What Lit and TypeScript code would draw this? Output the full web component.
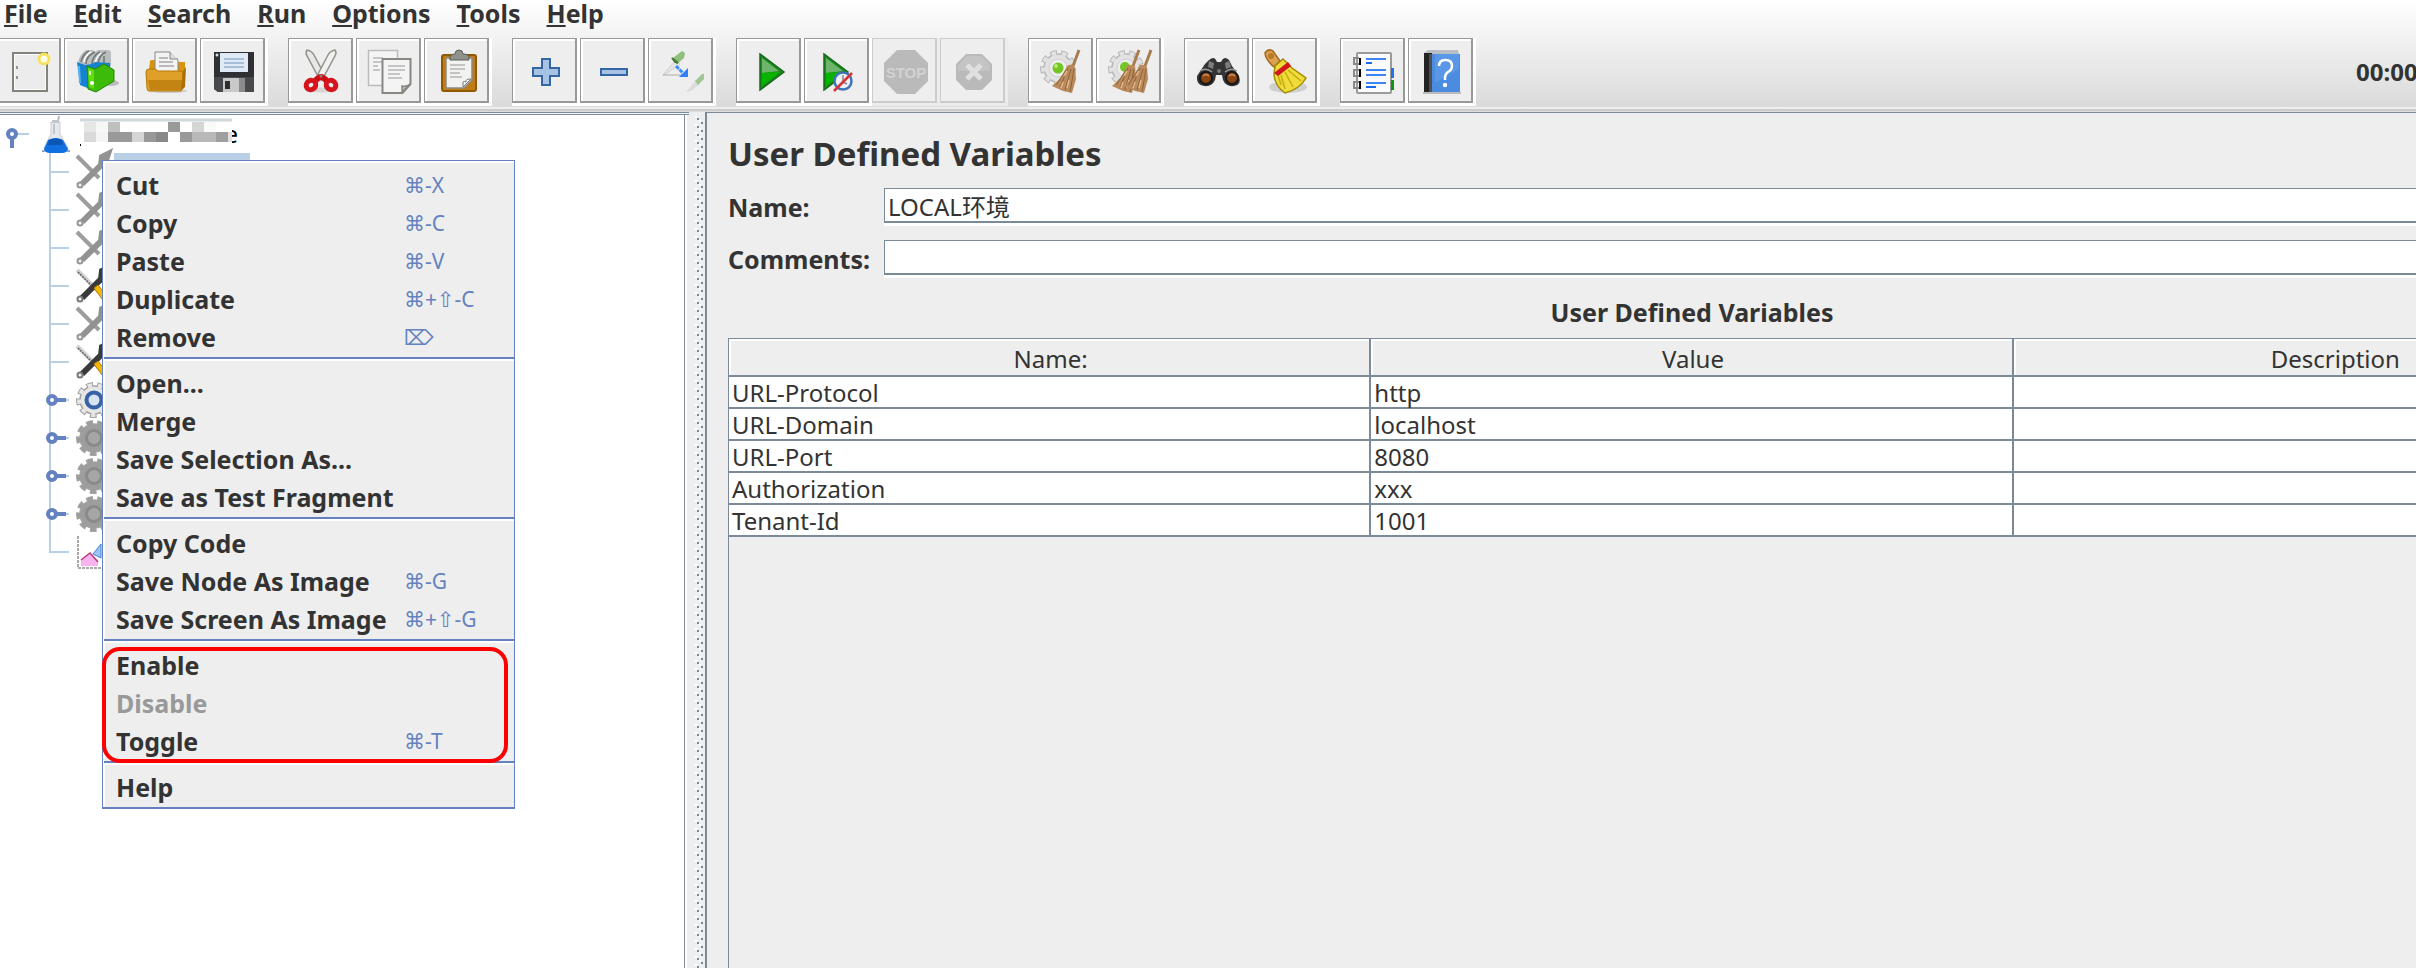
import { LitElement, html, css, svg, nothing } from "lit";
import { customElement, state } from "lit/decorators.js";

const gear = (cx: number, cy: number, body: string, edge: string) => svg`
  <circle cx="${cx}" cy="${cy}" r="15" fill="none" stroke="${edge}" stroke-width="6" stroke-dasharray="6.4 4.072" />
  <circle cx="${cx}" cy="${cy}" r="14" fill="${body}" stroke="${edge}" stroke-width="1.500" />
  <circle cx="${cx}" cy="${cy}" r="15" fill="none" stroke="${body}" stroke-width="4" stroke-dasharray="4.4 6.072" stroke-dashoffset="-1" />`;

const broom = (dx: number) => svg`
  <g transform="translate(${dx} 0)">
    <path d="M40 1l-6 16" stroke="#a87b4f" stroke-width="3" />
    <path d="M28 17q4-3 8 1l1 12-4 14-9-2-11-5 9-8z" fill="#b98a5c" />
    <path d="M29 19l-8 19M32 20l-6 21M35 20l-4 23M27 21l-10 15" stroke="#8f6238" stroke-width="1" fill="none" />
    <path d="M28 22l-3 5M24 33l-2 6M30 31l-2 8" stroke="#e2b88a" stroke-width="1.500" />
  </g>`;

const sheetLines = (x: number, y: number, w: number) => svg`
  <path d="M${x} ${y}h${w}M${x} ${y + 4}h${w}M${x} ${y + 8}h${w - 5}M${x} ${y + 12}h${w - 3}" stroke="#b5b5b5" stroke-width="1.500" />`;

const icons: Record<string, unknown> = {
  new: svg`
    <rect x="6" y="4" width="34" height="38" fill="#ececec" stroke="#82847c" stroke-width="2" />
    <rect x="7.500" y="5.500" width="31" height="35" fill="none" stroke="#fafafa" />
    <path d="M10 17v3M10 27v3" stroke="#777" stroke-width="1.500" />
    <circle cx="37" cy="10" r="5" fill="#fffce8" stroke="#f5e15e" stroke-width="3" />`,
  templates: svg`
    <ellipse cx="36" cy="34" rx="8" ry="3" fill="#bbb" />
    <path d="M3 13q2-8 8-12h7l2 2 3-2h9q5 0 4 5v11l-10 2H10z" fill="#b9bdbd" />
    <path d="M6 13q1-7 8-11M11 15q0-8 9-12M17 16q0-9 8-13M23 15q1-9 8-12M29 15V7" stroke="#6f7676" stroke-width="1.500" fill="none" />
    <path d="M9 13q1-7 7-10M20 15q1-7 6-11" stroke="#fff" stroke-width="1.500" fill="none" />
    <path d="M2 13l8 3 7-1 3-2 15 1v10l-20 16-10-4z" fill="#1583cf" />
    <path d="M4 17l1 17" stroke="#54b4f0" stroke-width="2" />
    <path d="M12 17l8 3 9-5 10 6v11L21 43l-8-3z" fill="#3cbb08" stroke="#208a05" />
    <path d="M13 19l6 2v19l-5-2z" fill="#5ee00e" />
    <circle cx="17" cy="34" r="2" fill="#fff" /><path d="M15 22v4" stroke="#e6ffd6" stroke-width="2" />`,
  open: svg`
    <ellipse cx="25" cy="42" rx="19" ry="2" fill="#ccc" />
    <path d="M7 12q0-1 2-1h4v11H6zM34 13h8v18l-6 9z" fill="#d8930f" />
    <path d="M12 3h15l8 8v12H12z" fill="#f3f3f3" stroke="#888" />
    <path d="M27 3v7h8" fill="#ddd" stroke="#888" />
    <path d="M16 9h9M16 13h14M16 17h15" stroke="#a7a7a7" stroke-width="1.500" />
    <path d="M3 23q0-3 3-3h6l3 2h22q3 0 3 3l-2 17H6q-2 0-2-3z" fill="#dfa02a" stroke="#b57905" />
    <path d="M5 31h34l-1 10H7z" fill="#c48411" />
    <path d="M40 22l3-4-1 20-4 4z" fill="#a96f05" />`,
  save: svg`
    <path d="M3 3h40v40H7l-4-3z" fill="#2f3033" />
    <path d="M3 28h40v15H7l-4-3z" fill="#48494d" />
    <rect x="9" y="4" width="28" height="19" fill="#dfeaf6" />
    <path d="M13 10h20M13 14h20M13 18h20" stroke="#a6bed8" stroke-width="2" />
    <rect x="12" y="29" width="22" height="14" fill="#c9c9c9" />
    <path d="M28 29h6v14h-6z" fill="#8b8b8b" />
    <rect x="14" y="32" width="5" height="8" fill="#2c2d30" />
    <circle cx="6" cy="6" r="1.500" fill="#ddd" />`,
  cut: svg`
    <ellipse cx="22" cy="41" rx="16" ry="2.500" fill="#d5d5d5" />
    <path d="M8 1q5 1 7 5l10 19-4 6L8 7q-2-3 0-6z" fill="#e8e8e6" stroke="#92948e" stroke-width="1.500" />
    <path d="M36 1q-5 1-7 5L19 25l4 6L36 7q2-3 0-6z" fill="#f1f1ef" stroke="#92948e" stroke-width="1.500" />
    <path d="M16 32q4-4 6-4t6 4" stroke="#cc0f14" stroke-width="6" fill="none" />
    <ellipse cx="12" cy="36" rx="5" ry="4.500" fill="#eee" stroke="#d5151b" stroke-width="5" transform="rotate(-35 12 36)" />
    <ellipse cx="32" cy="36" rx="5" ry="4.500" fill="#eee" stroke="#d5151b" stroke-width="5" transform="rotate(35 32 36)" />
    <circle cx="22" cy="27" r="1.500" fill="#888" />`,
  copy: svg`
    <path d="M1.500 1.500h29v35h-29z" fill="#f4f4f4" stroke="#bcbcbc" stroke-width="1.500" />
    ${sheetLines(6, 9, 10)}
    <path d="M15.500 10h28v25l-8 9h-20z" fill="#f4f4f4" stroke="#868882" stroke-width="2" />
    ${sheetLines(21, 17, 17)}
    <path d="M43 35l-8 8v-6q5 1 8-2z" fill="#bbb" stroke="#868882" stroke-width="1.500" />`,
  paste: svg`
    <rect x="7" y="6" width="34" height="36" rx="2" fill="#c17d11" stroke="#8f5902" stroke-width="2" />
    <path d="M11 9h26v22l-8 8H11z" fill="#f2f2f0" stroke="#8b8b84" stroke-width="1.500" />
    ${sheetLines(15, 16, 15)}
    <path d="M36 30l-8 8v-5q2-1 3 0-1-3 5-3z" fill="#fff" stroke="#777" />
    <path d="M15 9q0-4 5-4 0-4 4-4t4 4q6 0 6 4v2H15z" fill="#8f928b" stroke="#5c5e58" />`,
  plus: svg`<path d="M19 10h8v9h9v8h-9v9h-8v-9h-9v-8h9z" fill="#a6c3e3" stroke="#3465a4" stroke-width="2" />`,
  minus: svg`<path d="M10 20h26v6H10z" fill="#a6c3e3" stroke="#3465a4" stroke-width="2" />`,
  toggle: svg`
    <path d="M4 26l13-15 4 4L8 24z" fill="#e6e6e6" stroke="#cfcfcf" />
    <path d="M4 26h21" stroke="#aaa" stroke-width="1" />
    <path d="M14 9l9-7 3 2-1 5-7 6z" fill="#8fbf7a" /><path d="M13 9l6 5-3-1z" stroke="#4b7a3c" stroke-width="2" />
    <path d="M17 17l7 7" stroke="#3f8cff" stroke-width="3" stroke-dasharray="4 1" /><path d="M29 19v9h-9z" fill="#2f7ff8" />
    <path d="M27 43l10-12 4 4-9 7z" fill="#dcdcdc" />
    <path d="M36 32l7-7h2v5l-6 6z" fill="#a2c596" />`,
  start: svg`
    <path d="M13 5v36l24-18z" fill="#1c8a1c" />
    <path d="M15 9l17 13-17 2z" fill="#6db56d" /><path d="M15 24l18-1-18 14z" fill="#09b400" />
    <path d="M13 5v36l24-18z" fill="none" stroke="#176a1b" stroke-width="1.500" />`,
  startNoTimers: svg`
    <path d="M9 5v36l24-18z" fill="#1c8a1c" />
    <path d="M11 9l17 13-17 2z" fill="#6db56d" /><path d="M11 24l18-1-18 14z" fill="#09b400" />
    <path d="M9 5v36l24-18z" fill="none" stroke="#176a1b" stroke-width="1.500" />
    <circle cx="28" cy="32" r="8.500" fill="#eef1f5" stroke="#3c74b6" stroke-width="2.500" />
    <path d="M28 26v7l4 2" stroke="#888" stroke-width="1.500" fill="none" />
    <path d="M19 42l18-18" stroke="#d8323a" stroke-width="2.500" />`,
  stop: svg`
    <path d="M14 1h18l13 13v18L32 45H14L1 32V14z" fill="#bababa" />
    <text x="23" y="29" text-anchor="middle" font-size="15" font-weight="700" fill="#d2d2d2" class="stop-text">STOP</text>`,
  shutdown: svg`
    <path d="M15 5h16l10 10v16L31 41H15L5 31V15z" fill="#bababa" />
    <path d="M7 22V16l9-9h14l9 9v6z" fill="#c4c4c4" />
    <path d="M16 16l14 14M30 16L16 30" stroke="#e0e0e0" stroke-width="5" />`,
  clear: svg`
    ${gear(19, 19, "#e2e2e2", "#b9b9b9")}
    <circle cx="19" cy="19" r="9" fill="#ededed" stroke="#cfcfcf" />
    <circle cx="19" cy="19" r="5.500" fill="#73c51f" /><circle cx="17" cy="17" r="2" fill="#b7ec78" />
    ${broom(0)}`,
  clearAll: svg`
    ${gear(19, 19, "#e2e2e2", "#b9b9b9")}
    <circle cx="19" cy="19" r="9" fill="#ededed" stroke="#cfcfcf" />
    <circle cx="18" cy="18" r="5" fill="#73c51f" />
    ${broom(-8)}${broom(4)}`,
  search: svg`
    <path d="M14 11q5-4 7 0l1 2h4l1-2q3-4 7 0l3 6 7 10q3 9-5 10t-11-6l-1-5h-6l-1 5q-3 7-11 6T2 27l8-12z" fill="#343434" />
    <path d="M14 12l5 2-1 6-5-2zM30 14l4-2 2 6-5 2z" fill="#7d7d7d" />
    <path d="M5 22q6-4 12 1M30 23q6-5 12-1" stroke="#999" stroke-width="1.500" fill="none" />
    <circle cx="24" cy="22" r="2" fill="#777" />
    <circle cx="11" cy="29" r="6" fill="#8a4412" stroke="#171717" stroke-width="2" />
    <circle cx="37" cy="29" r="6" fill="#8a4412" stroke="#171717" stroke-width="2" />
    <path d="M8 27q3-3 6 0M34 27q3-3 6 0" stroke="#c98049" stroke-width="2" fill="none" />`,
  resetSearch: svg`
    <ellipse cx="25" cy="38" rx="19" ry="6" fill="#cfcfcf" />
    <path d="M2 4q3-5 8-2l7 10-6 6Q2 10 2 4z" fill="#d9a154" stroke="#a56a1a" stroke-width="1.500" />
    <circle cx="8" cy="7" r="3" fill="#b87826" />
    <path d="M12 17l8-7 4 4 5 5 14 10Q37 40 22 44 12 37 11 26z" fill="#efdb3a" stroke="#a18a05" stroke-width="1.500" />
    <path d="M18 26l4 14M22 23l8 15M25 21l13 11M15 26l3 10" stroke="#c4ac0e" stroke-width="1.500" />
    <path d="M11 24l14-11 3 4-13 10z" fill="#d1171c" />`,
  list: svg`
    <rect x="6" y="4" width="34" height="40" rx="1" fill="#fbfbfb" stroke="#9a9a9a" stroke-width="2" />
    <path d="M15 10h20M15 21h20M15 26h20M15 34h20" stroke="#3d86f0" stroke-width="2" />
    <path d="M15 14h6M15 38h10" stroke="#1a68ee" stroke-width="2" />
    <path d="M8 9h2v7H8zM8 20h2v8H8zM8 32h2v8H8z" fill="#000" />
    <path d="M8 9H3v6h5M8 21H3v6h5M8 33H3v6h5" stroke="#8a8a8a" stroke-width="2" fill="none" />
    <path d="M40 19h3v10h-3z" fill="#1f72ef" /><path d="M40 31h3v10h-3z" fill="#0b9412" />`,
  help: svg`
    <path d="M4 44h38" stroke="#bbb" stroke-width="2" />
    <path d="M5 4l4-3h30l1 4H7z" fill="#b9bec5" />
    <path d="M5 4h8v39H5z" fill="#222" />
    <path d="M10 5h31v38H13z" fill="#4b8be0" />
    <path d="M10 5h3v38h-3z" fill="#4a4f58" /><path d="M16 5h24v15L16 34z" fill="#5a97e6" />
    <path d="M20 17q0-6 6.500-6t6.500 6q0 4-4 6-3 2-3 6v2" stroke="#fff" stroke-width="2.500" fill="none" />
    <circle cx="26" cy="36" r="2.200" fill="#fff" />`,
};

const toolGroups: { icon: string; label: string; disabled?: boolean }[][] = [
  [
    { icon: "new", label: "New" },
    { icon: "templates", label: "Templates" },
    { icon: "open", label: "Open" },
    { icon: "save", label: "Save" },
  ],
  [
    { icon: "cut", label: "Cut" },
    { icon: "copy", label: "Copy" },
    { icon: "paste", label: "Paste" },
  ],
  [
    { icon: "plus", label: "Expand all" },
    { icon: "minus", label: "Collapse all" },
    { icon: "toggle", label: "Toggle" },
  ],
  [
    { icon: "start", label: "Start" },
    { icon: "startNoTimers", label: "Start no pauses" },
    { icon: "stop", label: "Stop", disabled: true },
    { icon: "shutdown", label: "Shutdown", disabled: true },
  ],
  [
    { icon: "clear", label: "Clear" },
    { icon: "clearAll", label: "Clear all" },
  ],
  [
    { icon: "search", label: "Search" },
    { icon: "resetSearch", label: "Reset search" },
  ],
  [
    { icon: "list", label: "Function helper" },
    { icon: "help", label: "Help" },
  ],
];

const menus = ["File", "Edit", "Search", "Run", "Options", "Tools", "Help"];

type Item = { label: string; keys?: string; disabled?: boolean };
const popupGroups: { marked?: boolean; items: Item[] }[] = [
  {
    items: [
      { label: "Cut", keys: "⌘-X" },
      { label: "Copy", keys: "⌘-C" },
      { label: "Paste", keys: "⌘-V" },
      { label: "Duplicate", keys: "⌘+⇧-C" },
      { label: "Remove", keys: "⌦" },
    ],
  },
  {
    items: [
      { label: "Open..." },
      { label: "Merge" },
      { label: "Save Selection As..." },
      { label: "Save as Test Fragment" },
    ],
  },
  {
    items: [
      { label: "Copy Code" },
      { label: "Save Node As Image", keys: "⌘-G" },
      { label: "Save Screen As Image", keys: "⌘+⇧-G" },
    ],
  },
  {
    marked: true,
    items: [
      { label: "Enable" },
      { label: "Disable", disabled: true },
      { label: "Toggle", keys: "⌘-T" },
    ],
  },
  { items: [{ label: "Help" }] },
];

const config = (on: boolean) => svg`
  <path d="M1 2l22 22" stroke="${on ? "#cfcfcf" : "#9d9d9d"}" stroke-width="4" />
  ${on ? svg`<path d="M2 4l18 18" stroke="#666" stroke-width="1.500" stroke-dasharray="2 1" />` : nothing}
  <path d="M6 30l19-19 1-8 6-3-2 6 2 3" stroke="${on ? "#3a3a3a" : "#929292"}" stroke-width="6" fill="none" />
  <circle cx="4" cy="31" r="2.500" fill="#f2f2f2" stroke="${on ? "#777" : "#969696"}" stroke-width="2" />
  ${on ? svg`<path d="M18 20l4-3 8 10-4 4z" fill="#f5b800" stroke="#b57d00" />` : nothing}`;

const nodeIcons: Record<string, unknown> = {
  configOff: config(false),
  configOn: config(true),
  groupOn: svg`
    ${gear(18, 18, "#e6e6e6", "#a2a2a2")}
    <circle cx="18" cy="18" r="7.500" fill="#d9e4f2" stroke="#3763a6" stroke-width="4" />`,
  groupOff: svg`
    ${gear(18, 18, "#9d9d9d", "#a3a3a3")}
    <circle cx="18" cy="18" r="7.500" fill="#a6a6a6" stroke="#8a8a8a" stroke-width="3" />`,
  chart: svg`
    <path d="M2 2v32h32" stroke="#aaa" stroke-width="2" fill="none" stroke-dasharray="3 1" />
    <path d="M17 20l8-10v14z" fill="#9dc4f5" stroke="#3b84e0" />
    <path d="M5 32v-6l9-7 8 7v6z" fill="#f9b4ef" />
    <path d="M5 26l9-7 8 9" stroke="#b43a78" stroke-width="1.500" fill="none" />`,
};

const nodes: { icon: string; branch?: boolean; selected?: boolean }[] = [
  { icon: "configOff", selected: true },
  { icon: "configOff" },
  { icon: "configOff" },
  { icon: "configOn" },
  { icon: "configOff" },
  { icon: "configOn" },
  { icon: "groupOn", branch: true },
  { icon: "groupOff", branch: true },
  { icon: "groupOff", branch: true },
  { icon: "groupOff", branch: true },
  { icon: "chart" },
];

const mosaic: [number, number, number, string][] = [
  [4, 0, 12, "#e6e6e6"], [16, 0, 12, "#f7f7f7"], [28, 0, 12, "#bfbfbf"], [88, 0, 12, "#9a9a9a"],
  [112, 0, 12, "#d5d5d5"], [124, 0, 12, "#fafafa"],
  [4, 1, 12, "#d9d9d9"], [16, 1, 12, "#f4f4f4"], [28, 1, 24, "#999"], [52, 1, 12, "#d5d5d5"],
  [64, 1, 12, "#989898"], [76, 1, 12, "#888"], [100, 1, 12, "#999"], [112, 1, 24, "#b8b8b8"],
  [136, 1, 12, "#9f9f9f"], [148, 1, 4, "#e0e0e0"],
];

const variables = [
  ["URL-Protocol", "http", ""],
  ["URL-Domain", "localhost", ""],
  ["URL-Port", "8080", ""],
  ["Authorization", "xxx", ""],
  ["Tenant-Id", "1001", ""],
];

@customElement("test-tree")
class TestTree extends LitElement {
  static styles = css`
    :host { display: block; }
    .tree, .children { list-style: none; margin: 0; padding: 0; }
    .row { display: flex; align-items: center; height: 38px; }
    .root-handle { flex: none; width: 36px; height: 38px; }
    .flask { flex: none; width: 32px; height: 38px; margin-left: 4px; }
    .masked { display: flex; margin-left: 8px; height: 38px; }
    .tail { width: 6px; overflow: hidden; display: flex; justify-content: flex-end; line-height: 38px; color: #000; }
    .branch { flex: none; width: 32px; height: 38px; margin-left: 44px; }
    .node-icon { flex: none; width: 36px; height: 36px; overflow: visible; }
    .node-name { width: 136px; height: 38px; margin-left: 2px; }
    .node-name.selected { background: #b8cfe5; }
  `;

  render() {
    return html`
      <ul class="tree" role="tree">
        <li role="treeitem" aria-expanded="true" aria-label="Test plan">
          <div class="row">
            <svg class="root-handle" viewBox="0 0 36 38">
              <path d="M16 19h13" stroke="#b8cfe5" stroke-width="2" />
              <path d="M12 22v11" stroke="#6382bf" stroke-width="4" />
              <circle cx="12" cy="19" r="4" fill="#fff" stroke="#6382bf" stroke-width="4" />
            </svg>
            <svg class="flask" viewBox="0 0 32 38">
              <path d="M18 6l1-5" stroke="#bbb" stroke-width="2" />
              <path d="M2 36h28" stroke="#8ba6cc" stroke-width="2" />
              <path d="M11 7h9v12l8 14q0 4-4 4H8q-4 0-4-4l7-14z" fill="#e4e8ec" stroke="#c9ced3" />
              <path d="M12 5h7v3h-7zM13 9h2v10h-2z" fill="#bfc5c9" />
              <path d="M8 25q8-4 15 0l5 9q-1 4-6 4H10q-5 0-6-4z" fill="#1170e0" />
              <path d="M9 25q7-3 13 0l1 5H8z" fill="#0a57b5" />
            </svg>
            <span class="masked">
              <svg width="152" height="38" viewBox="0 0 152 38" aria-hidden="true">
                <path d="M0 5h152" stroke="#d0d7da" stroke-width="3" />
                ${mosaic.map(([x, r, w, c]) => svg`<rect x="${x}" y="${7 + r * 10}" width="${w}" height="10" fill="${c}" />`)}
                <rect x="0" y="29" width="1" height="2" fill="#000" />
              </svg>
              <span class="tail">e</span>
            </span>
          </div>
          <ul class="children" role="group">
            ${nodes.map((n, i) => {
              const last = i === nodes.length - 1;
              return html`<li class="row" role="treeitem" aria-label="Node ${i + 1}">
                <svg class="branch" viewBox="0 0 32 38">
                  <path d="M6 0v${last ? 20 : 38}M6 19h19" stroke="#b8cfe5" stroke-width="2" fill="none" />
                  ${n.branch
                    ? svg`<path d="M10 19h12" stroke="#6382bf" stroke-width="4" />
                        <circle cx="8" cy="19" r="4" fill="#fff" stroke="#6382bf" stroke-width="4" />`
                    : nothing}
                </svg>
                <svg class="node-icon" viewBox="0 0 36 36">${nodeIcons[n.icon]}</svg>
                ${n.selected ? html`<span class="node-name selected"></span>` : nothing}
              </li>`;
            })}
          </ul>
        </li>
      </ul>
    `;
  }
}

@customElement("context-menu")
class ContextMenu extends LitElement {
  static styles = css`
    :host { display: block; }
    .menu {
      box-sizing: border-box;
      width: 413px;
      padding: 4px 0 2px;
      background: #eee;
      border: 1px solid #6382bf;
      border-bottom-width: 2px;
      box-shadow: inset 2px 2px 0 #fff;
    }
    .group { position: relative; }
    .rule { height: 2px; margin: 2px 0 2px 1px; border: 0; background: #6382bf; border-bottom: 2px solid #fff; }
    .item {
      display: grid;
      grid-template-columns: 288px 1fr;
      width: 100%;
      height: 38px;
      margin: 0;
      padding: 2px 0 0 13px;
      border: 0;
      background: none;
      text-align: left;
      white-space: nowrap;
      color: #333;
      font: 700 25px/36px "Noto Sans", sans-serif;
    }
    .item:disabled { color: #999; }
    .keys { color: #6382bf; font: 400 21px/36px "Noto Sans", "DejaVu Sans", sans-serif; }
    .mark {
      position: absolute;
      inset: 2px 6px -4px -1px;
      border: 4px solid #f00;
      border-radius: 18px;
      pointer-events: none;
    }
  `;

  render() {
    return html`<div class="menu" role="menu">
      ${popupGroups.map(
        (g, i) => html`
          ${i ? html`<hr class="rule" />` : nothing}
          <div class="group">
            ${g.items.map(
              (it) => html`<button class="item" role="menuitem" ?disabled=${it.disabled}>
                <span>${it.label}</span><span class="keys">${it.keys ?? ""}</span>
              </button>`
            )}
            ${g.marked ? html`<div class="mark"></div>` : nothing}
          </div>
        `
      )}
    </div>`;
  }
}

@customElement("app-root")
class AppRoot extends LitElement {
  @state() private name = "LOCAL环境";
  @state() private comments = "";

  static styles = css`
    :host {
      display: flex;
      flex-direction: column;
      height: 100vh;
      overflow: hidden;
      background: #eee;
      color: #333;
      font: 400 24px/32px "Noto Sans", "Noto Sans CJK SC", sans-serif;
    }
    .top {
      flex: none;
      background: linear-gradient(#fff, #fcfcfc 10px, #dadada);
      border-bottom: 2px solid #eee;
    }
    .edge { flex: none; height: 3px; background: linear-gradient(#ccc 2px, #ddd 2px); }
    .menubar { display: flex; align-items: flex-start; gap: 26px; height: 36px; padding-left: 4px; }
    .menu { padding: 0; border: 0; background: none; color: #333; font: 700 25px/26px "Noto Sans", sans-serif; }
    .key { text-decoration: underline; text-decoration-thickness: 2px; text-underline-offset: 2px; }
    .toolbar { display: flex; align-items: center; gap: 20px; height: 71px; margin-left: -4px; }
    .tools { display: flex; }
    .tool {
      box-sizing: border-box;
      width: 68px;
      height: 68px;
      padding: 0 3px 3px 0;
      border: 0;
      background: #fff;
    }
    .face {
      display: grid;
      place-items: center;
      box-sizing: border-box;
      height: 65px;
      border: solid #999;
      border-width: 1px 2px 2px 1px;
      background: #eee;
      box-shadow: inset 2px 2px 0 #fff;
    }
    .tool:disabled { background: #ececec; }
    .tool:disabled .face { border-color: #ccc; box-shadow: none; }
    .glyph { width: 46px; height: 46px; overflow: visible; }
    .stop-text { font-family: "Liberation Sans", sans-serif; }
    .clock { width: 60px; margin-left: auto; white-space: nowrap; font-weight: 700; }
    .body { flex: 1; display: flex; min-height: 0; }
    .left {
      position: relative;
      flex: none;
      box-sizing: border-box;
      width: 689px;
      padding: 2px 0 0;
      background: linear-gradient(to right, #fff 684px, #7a8a99 684px 685px, #fff 685px 687px, #eee 687px);
      border-top: 1px solid #7a8a99;
      box-shadow: inset 0 1px 0 #f4f8fc, inset 0 2px 0 #7a8a99;
    }
    .popup { position: absolute; z-index: 1; left: 102px; top: 47px; }
    .divider { flex: none; width: 16px; padding: 4px 0 0 6px; box-sizing: border-box; }
    .bumps { display: block; width: 8px; height: 100%; }
    .right {
      flex: 1;
      min-width: 0;
      display: flex;
      flex-direction: column;
      padding: 19px 0 0 21px;
      border: solid #7a8a99;
      border-width: 1px 0 0 2px;
      overflow: hidden;
    }
    .content { flex: 1; display: flex; flex-direction: column; width: calc(100% + 240px); }
    .title { margin: 0 0 12px; font-size: 33px; line-height: 44px; font-weight: 700; }
    .fields { display: grid; grid-template-columns: 156px 1fr; row-gap: 14px; }
    .label { font-size: 25px; font-weight: 700; line-height: 38px; }
    .field {
      box-sizing: border-box;
      width: 100%;
      height: 35px;
      margin: 0 0 3px;
      padding: 0 3px;
      border: solid #7a8a99;
      border-width: 1px 0 2px 1px;
      border-radius: 0;
      outline: 0;
      background: #fff;
      box-shadow: 0 3px 0 #fff;
      color: #333;
      font: inherit;
    }
    .table-title { margin: 18px 0 10px; text-align: center; font-size: 25px; line-height: 32px; font-weight: 700; }
    .scroll { flex: 1; border: solid #7a8a99; border-width: 1px 0 0 1px; }
    .vars { width: 100%; table-layout: fixed; border-spacing: 0; }
    .vars th, .vars td { padding: 2px 0 0 3px; border: solid #7a8a99; border-width: 0 2px 2px 0; }
    .vars th { height: 32px; padding-top: 4px; line-height: 32px; font-weight: 400; box-shadow: inset 2px 2px 0 #fff; }
    .vars td { height: 28px; line-height: 28px; background: #fff; }
  `;

  render() {
    return html`
      <header class="top">
        <nav class="menubar">
          ${menus.map((m) => html`<button class="menu"><span class="key">${m[0]}</span>${m.slice(1)}</button>`)}
        </nav>
        <div class="toolbar" role="toolbar">
          ${toolGroups.map(
            (g) => html`<div class="tools">
              ${g.map(
                (t) => html`<button class="tool" aria-label=${t.label} ?disabled=${t.disabled}>
                  <span class="face"><svg class="glyph" viewBox="-2 -2 46 46">${icons[t.icon]}</svg></span>
                </button>`
              )}
            </div>`
          )}
          <span class="clock">00:00:00</span>
        </div>
      </header>
      <div class="edge"></div>
      <main class="body">
        <section class="left">
          <test-tree></test-tree>
          <context-menu class="popup"></context-menu>
        </section>
        <div class="divider">
          <svg class="bumps" aria-hidden="true">
            <defs>
              <pattern id="bump" width="8" height="8" patternUnits="userSpaceOnUse">
                <path d="M0 0h2v2H0zM4 4h2v2H4z" fill="#fff" />
                <path d="M2 2h2v2H2zM6 6h2v2H6z" fill="#7a8a99" />
              </pattern>
            </defs>
            <rect width="8" height="100%" fill="url(#bump)" />
          </svg>
        </div>
        <section class="right">
          <div class="content">
            <h1 class="title">User Defined Variables</h1>
            <div class="fields">
              <label class="label" for="name">Name:</label>
              <input class="field" id="name" .value=${this.name}
                @input=${(e: Event) => (this.name = (e.target as HTMLInputElement).value)} />
              <label class="label" for="comments">Comments:</label>
              <input class="field" id="comments" .value=${this.comments}
                @input=${(e: Event) => (this.comments = (e.target as HTMLInputElement).value)} />
            </div>
            <h2 class="table-title">User Defined Variables</h2>
            <div class="scroll">
              <table class="vars">
                <thead>
                  <tr><th>Name:</th><th>Value</th><th>Description</th></tr>
                </thead>
                <tbody>
                  ${variables.map((r) => html`<tr>${r.map((c) => html`<td>${c}</td>`)}</tr>`)}
                </tbody>
              </table>
            </div>
          </div>
        </section>
      </main>
    `;
  }
}
